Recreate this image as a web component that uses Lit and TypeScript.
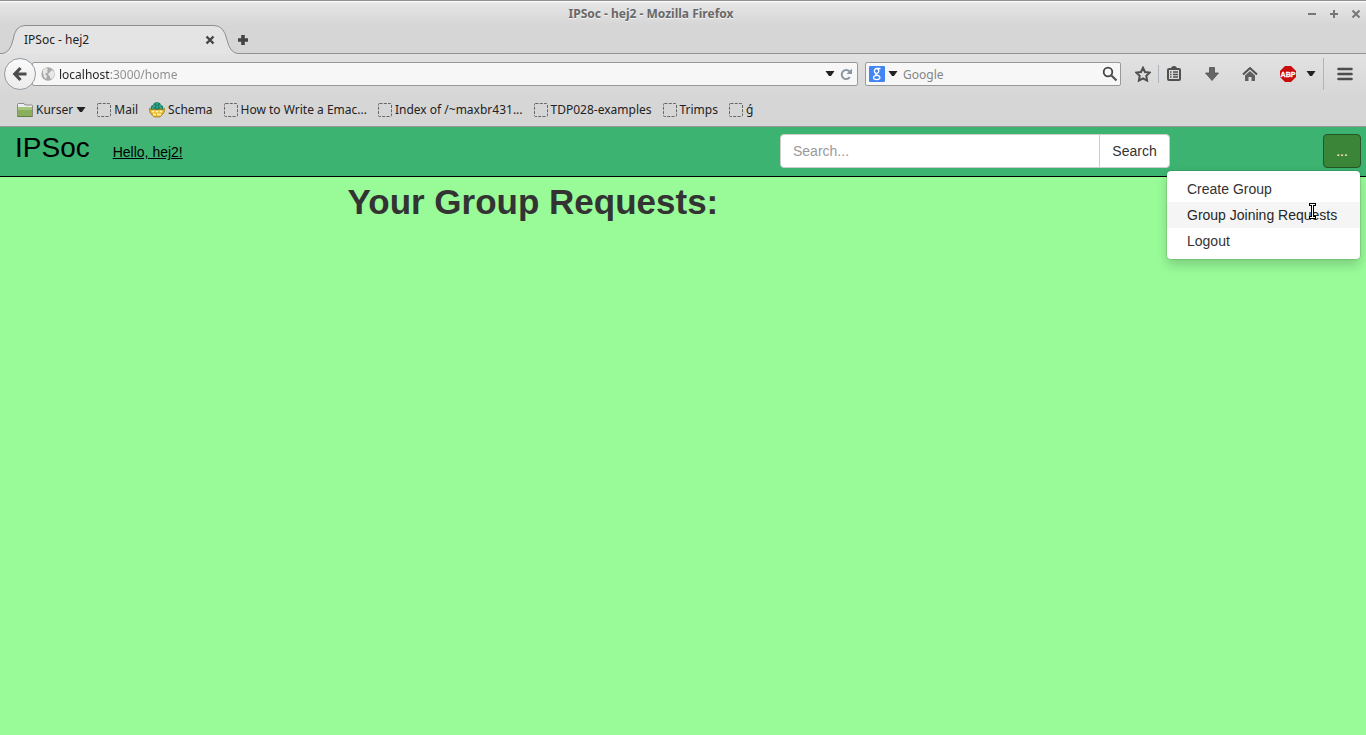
import { LitElement, html, css } from "lit";
import { customElement, property } from "lit/decorators.js";

const caret = html`<svg class="caret" width="10" height="6" viewBox="0 0 10 6" aria-hidden="true">
  <path d="M.5 0h9L6 5H4z" fill="#222" />
</svg>`;

const blankIcon = html`<svg width="14" height="14" viewBox="0 0 14 14" aria-hidden="true">
  <rect x=".5" y=".5" width="13" height="13" rx="1" fill="none" stroke="#666" stroke-dasharray="3 1.3" />
</svg>`;

const folderIcon = html`<svg width="16" height="14" viewBox="0 0 16 14" aria-hidden="true">
  <path d="M.5 13.5V1.5Q.5.5 1.5.5H7l1 1.500h6.500q1 0 1 1v10.500z" fill="#eee" stroke="#8a8a8a" />
  <path d="M1 4h14v9H1z" fill="#8bae5c" />
  <path d="M1 4h14v3H1z" fill="#a5c47c" />
  <path d="M.5 13.500h15" stroke="#66803f" />
</svg>`;

const schemaIcon = html`<svg width="16" height="16" viewBox="0 0 16 16" aria-hidden="true">
  <path d="M2 6Q1 4 4 3l1-2 3-1 3 1 1 2q3 1 2 3l1 2H1z" fill="#17836b" />
  <path d="M4 4h2m1-2h2m1 2h2M3 6h2m2-1h2m2 1h2" fill="none" stroke="#5cc0a2" />
  <path d="M0 6l3 2 2-1 3 1 3-1 2 1 3-2q0 4-2 6l-1 1-2 2H5l-2-2-1-1Q0 10 0 6z" fill="#e0ae25" stroke="#8f6d16" stroke-width=".6" />
  <path d="M2.500 9.500h3m1 0h3m1 0h3M4 12.500h3m1 0h4" stroke="#fff3a4" stroke-width="1.800" />
</svg>`;

@customElement("book-mark")
class BookMark extends LitElement {
  @property() label = "";
  @property() kind = "blank";

  static styles = css`
    :host { display: block; }
    .link {
      display: flex;
      align-items: center;
      gap: 3px;
      height: 20px;
      color: #222;
      text-decoration: none;
      font: 12px/20px "Noto Sans", sans-serif;
      white-space: nowrap;
    }
  `;

  render() {
    const icon = this.kind === "folder" ? folderIcon : this.kind === "schema" ? schemaIcon : blankIcon;
    return html`<a class="link" href="#">${icon}<span>${this.label}</span>${this.kind === "folder" ? caret : ""}</a>`;
  }
}

@customElement("browser-chrome")
class BrowserChrome extends LitElement {
  static styles = css`
    :host {
      display: block;
      font: 12px/20px "Noto Sans", sans-serif;
      color: #222;
      background: #d6d6d6;
      border-top: 1px solid #929292;
      border-bottom: 1px solid #979797;
    }
    button {
      display: flex;
      align-items: center;
      justify-content: center;
      padding: 0;
      border: 0;
      background: none;
      flex: none;
    }
    svg { display: block; flex: none; }
    .top { background: linear-gradient(#fff 0, #e6e6e6 2px, #d6d6d6 24px); }
    .title {
      box-sizing: border-box;
      display: grid;
      grid-template-columns: 1fr 64px;
      align-items: center;
      height: 24px;
      padding-top: 1px;
    }
    .name {
      font-weight: bold;
      color: #686868;
      text-align: center;
      text-shadow: 0 1px #f4f4f4;
    }
    .window { display: flex; justify-content: flex-end; gap: 6px; padding-right: 2px; }
    .window button { width: 16px; height: 16px; }
    .tabs {
      display: flex;
      height: 29px;
      background: linear-gradient(#929292, #929292) 0 28px / 100% 1px no-repeat;
    }
    .tab { display: grid; width: 236px; height: 29px; }
    .tab > * { grid-area: 1 / 1; }
    .label {
      display: flex;
      align-items: center;
      justify-content: space-between;
      padding: 0 22px 0 24px;
    }
    .close { width: 16px; height: 16px; }
    .new { width: 14px; height: 29px; }
    .nav {
      display: flex;
      align-items: center;
      height: 40px;
      padding: 0 6px 0 4px;
      background: linear-gradient(#e2e2e2, #d7d7d7);
    }
    .back {
      box-sizing: border-box;
      width: 32px;
      height: 32px;
      border: 1px solid #929ba4;
      border-radius: 50%;
      background: linear-gradient(#fafafa, #ececec);
      z-index: 1;
    }
    .field {
      box-sizing: border-box;
      display: flex;
      align-items: center;
      height: 24px;
      border: 1px solid #999;
      border-radius: 2px;
      background: #f7f7f7;
    }
    .url { flex: 1; margin-left: -4px; padding-left: 8px; }
    .field input {
      flex: 1;
      min-width: 0;
      height: 20px;
      padding: 2px 0 0;
      border: 0;
      outline: 0;
      background: none;
      font: inherit;
    }
    .field .address {
      margin-left: 4px;
      color: transparent;
      background: linear-gradient(90deg, #222 51px, #8c8c8c 51px);
      -webkit-background-clip: text;
      background-clip: text;
    }
    .reload { width: 22px; height: 20px; }
    .search { width: 256px; margin: 0 7px; padding: 0 2px 0 3px; }
    .search input { margin-left: 5px; }
    .search input::placeholder { color: #858585; opacity: 1; }
    .engine { gap: 3px; }
    .tool { width: 30px; height: 32px; }
    .list { margin-right: 4px; }
    .wide { width: 38px; }
    .drop { width: 16px; height: 32px; margin-left: -4px; }
    .rule { width: 1px; height: 18px; background: #afb5bc; }
    .tall { height: 32px; margin: 0 6px 0 4px; }
    .marks {
      display: flex;
      align-items: center;
      gap: 11px;
      height: 32px;
      padding: 0 17px;
    }
  `;

  render() {
    return html`
      <div class="top">
        <div class="title">
          <span class="name">IPSoc - hej2 - Mozilla Firefox</span>
          <div class="window">
            <button aria-label="Minimize"><svg width="10" height="10"><path d="M1 5h8" stroke="#777" stroke-width="2" /></svg></button>
            <button aria-label="Maximize"><svg width="10" height="10"><path d="M1 5h8M5 1v8" stroke="#777" stroke-width="2" /></svg></button>
            <button aria-label="Close"><svg width="10" height="10"><path d="M1.500 1.500l7 7M8.500 1.500l-7 7" stroke="#777" stroke-width="2" /></svg></button>
          </div>
        </div>
        <div class="tabs">
          <div class="tab">
            <svg width="240" height="29" viewBox="0 0 240 29" aria-hidden="true">
              <path d="M0 29v-.5h2Q10 28 13 15 15 .500 25 .500H214Q224 .500 227 15 230 28 238 28.500h2V29z" fill="#e4e4e4" />
              <path d="M0 28.500h2Q10 28 13 15 15 .500 25 .500H214Q224 .500 227 15 230 28 238 28.500h2" fill="none" stroke="#8e8e8e" />
            </svg>
            <div class="label">
              <span>IPSoc - hej2</span>
              <button class="close" aria-label="Close tab"><svg width="10" height="10"><path d="M1.500 1.500l7 7M8.500 1.500l-7 7" stroke="#444" stroke-width="2.400" /></svg></button>
            </div>
          </div>
          <button class="new" aria-label="New tab"><svg width="12" height="12"><path d="M1 6h10M6 1v10" stroke="#444" stroke-width="3.600" /></svg></button>
        </div>
      </div>
      <div class="nav">
        <button class="back" aria-label="Back">
          <svg width="16" height="16" viewBox="0 0 16 16"><path d="M8.500 2L2.800 8l5.700 6M3 8h11.500" fill="none" stroke="#4d4d4d" stroke-width="3.200" /></svg>
        </button>
        <div class="field url">
          <svg width="14" height="14" viewBox="0 0 14 14" aria-hidden="true">
            <circle cx="7" cy="7" r="6.700" fill="#aaa" />
            <path d="M2 3l3-2 2 1-1 2 1 1-3 2 2 2-1 3-2-2-1-4zM8 6l3-3 2 2v4l-2 3-2-1V9L7 8z" fill="#e8e8e8" />
          </svg>
          <input class="address" aria-label="Address" value="localhost:3000/home" />
          ${caret}
          <button class="reload" aria-label="Reload">
            <svg width="13" height="13" viewBox="0 0 13 13"><path d="M9.800 9.200A4.500 4.500 0 1 1 9.500 3.400" fill="none" stroke="#8b96a0" stroke-width="2" /><path d="M12 .500v5.500H6.500z" fill="#8b96a0" /></svg>
          </button>
        </div>
        <div class="field search">
          <button class="engine" aria-label="Search engine">
            <svg width="16" height="16" viewBox="0 0 16 16">
              <rect width="16" height="16" rx="1" fill="#4285f4" />
              <g fill="none" stroke="#fff" stroke-width="1.300"><ellipse cx="7.600" cy="4.900" rx="2.200" ry="2.400" /><path d="M8 2.500h3.500M7.500 7.300q-1.500 1 0 1.700 3.400.800 3.400 2.600 0 2-3.200 2-3.200 0-3.200-2 0-1.800 3.300-2.200" /></g>
            </svg>
            ${caret}
          </button>
          <input aria-label="Search the web" placeholder="Google" />
          <button aria-label="Search">
            <svg width="16" height="16" viewBox="0 0 16 16"><circle cx="6" cy="6" r="4.300" fill="none" stroke="#444" stroke-width="1.800" /><path d="M9.200 9.200l5.300 5.300" stroke="#555" stroke-width="2.200" /></svg>
          </button>
        </div>
        <button class="tool" aria-label="Bookmark this page">
          <svg width="16" height="16" viewBox="0 0 16 16"><path d="M8 1.800l2 4.200 4.700.600-3.400 3.300.8 4.700L8 12.400l-4.100 2.200.8-4.700L1.300 6.600 6 6z" fill="none" stroke="#505050" stroke-width="2" /></svg>
        </button>
        <span class="rule"></span>
        <button class="tool list" aria-label="Bookmarks">
          <svg width="14" height="16" viewBox="0 0 14 16"><path d="M4 3q0-3 3-3t3 3z" fill="#505050" /><rect x="1" y="3" width="12" height="11" rx="1" fill="none" stroke="#505050" stroke-width="2" /><path d="M3 6h1.500M3 8.500h1.500M3 11h1.500M6 6h5M6 8.500h5M6 11h5" stroke="#505050" stroke-width="1.300" /></svg>
        </button>
        <button class="tool wide" aria-label="Downloads">
          <svg width="14" height="14" viewBox="0 0 14 14"><path d="M4.500.500h5V6h4L7 13.500.500 6h4z" fill="#666" stroke="#505050" stroke-width=".8" /></svg>
        </button>
        <button class="tool wide" aria-label="Home">
          <svg width="16" height="16" viewBox="0 0 16 16"><path d="M1 8.500L8 2l7 6.500" fill="none" stroke="#505050" stroke-width="2" /><path d="M3 9.500L8 5l5 4.500V15H9.500v-4h-3v4H3z" fill="#606060" /></svg>
        </button>
        <button class="tool wide" aria-label="Adblock Plus">
          <svg width="16" height="16" viewBox="0 0 16 16"><path d="M5 0h6l5 5v6l-5 5H5l-5-5V5z" fill="#c90d0d" /><text x="8" y="11" text-anchor="middle" font-family="Liberation Sans, sans-serif" font-size="7" font-weight="bold" fill="#fff" stroke="#fff" stroke-width=".3">ABP</text></svg>
        </button>
        <button class="drop" aria-label="Adblock menu">${caret}</button>
        <span class="rule tall"></span>
        <button class="tool" aria-label="Menu">
          <svg width="16" height="14" viewBox="0 0 16 14"><path d="M1.500 2h13M1.500 7h13M1.500 12h13" stroke="#4d4d4d" stroke-width="2.600" stroke-linecap="round" /></svg>
        </button>
      </div>
      <nav class="marks" aria-label="Bookmarks">
        <book-mark kind="folder" label="Kurser"></book-mark>
        <book-mark label="Mail"></book-mark>
        <book-mark kind="schema" label="Schema"></book-mark>
        <book-mark label="How to Write a Emac..."></book-mark>
        <book-mark label="Index of /~maxbr431..."></book-mark>
        <book-mark label="TDP028-examples"></book-mark>
        <book-mark label="Trimps"></book-mark>
        <book-mark label="ǵ"></book-mark>
      </nav>
    `;
  }
}

@customElement("app-root")
class AppRoot extends LitElement {
  static styles = css`
    :host {
      display: flex;
      flex-direction: column;
      min-height: 100vh;
      background: #98fb98;
      color: #333;
      font: 14px/20px "Liberation Sans", Arial, sans-serif;
    }
    .bar {
      box-sizing: border-box;
      display: flex;
      height: 50px;
      padding: 7px 5px 0 15px;
      background: #3cb371;
      border-bottom: 1px solid #000;
    }
    .brand { font-size: 28px; line-height: 28px; color: #000; text-decoration: none; }
    .hello { margin: 8px 0 0 23px; color: #000; }
    .find { display: flex; width: 390px; height: 34px; margin-left: auto; }
    .find input, .find button {
      box-sizing: border-box;
      height: 34px;
      margin: 0;
      border: 1px solid #ccc;
      background: #fff;
      font: inherit;
    }
    .find input { flex: 1; min-width: 0; padding: 0 12px; border-radius: 4px 0 0 4px; }
    .find input::placeholder { color: #999; opacity: 1; }
    .find button { width: 71px; margin-left: -1px; padding: 0; border-radius: 0 4px 4px 0; color: #333; }
    .account { position: relative; display: flex; justify-content: flex-end; width: 191px; }
    .more {
      box-sizing: border-box;
      width: 38px;
      height: 34px;
      padding: 0;
      border: 1px solid #255625;
      border-radius: 4px;
      background: #3a8537;
      color: #fff;
      font: inherit;
    }
    .menu {
      position: absolute;
      top: 37px;
      right: 1px;
      min-width: 193px;
      padding: 5px 0;
      border-radius: 4px;
      background: #fff;
      box-shadow: 0 0 0 1px rgba(0, 0, 0, 0.1), 0 6px 12px rgba(0, 0, 0, 0.18);
    }
    .item { display: block; padding: 3px 20px; color: #333; text-decoration: none; white-space: nowrap; }
    .hover { background: #f5f5f5; color: #262626; }
    .cursor { position: absolute; top: 32px; right: 43px; }
    .content { flex: 1; padding: 5px 0 0 calc(25% + 6px); }
    .heading { margin: 0; font-size: 35px; line-height: 40px; }
  `;

  render() {
    return html`
      <browser-chrome></browser-chrome>
      <header class="bar">
        <a class="brand" href="#">IPSoc</a>
        <a class="hello" href="#">Hello, hej2!</a>
        <form class="find">
          <input type="text" aria-label="Search" placeholder="Search..." />
          <button type="button">Search</button>
        </form>
        <div class="account">
          <button class="more" aria-haspopup="true" aria-expanded="true">...</button>
          <nav class="menu">
            <a class="item" href="#">Create Group</a>
            <a class="item hover" href="#">Group Joining Requests</a>
            <a class="item" href="#">Logout</a>
            <svg class="cursor" width="9" height="16" viewBox="0 0 9 16" aria-hidden="true">
              <path d="M1 1.500h7M4.500 2v12M1 14.500h7" fill="none" stroke="#000" stroke-width="3" />
              <path d="M2 1.500h5M4.500 2v12M2 14.500h5" fill="none" stroke="#fff" stroke-width="1" />
            </svg>
          </nav>
        </div>
      </header>
      <main class="content"><h1 class="heading">Your Group Requests:</h1></main>
    `;
  }
}
